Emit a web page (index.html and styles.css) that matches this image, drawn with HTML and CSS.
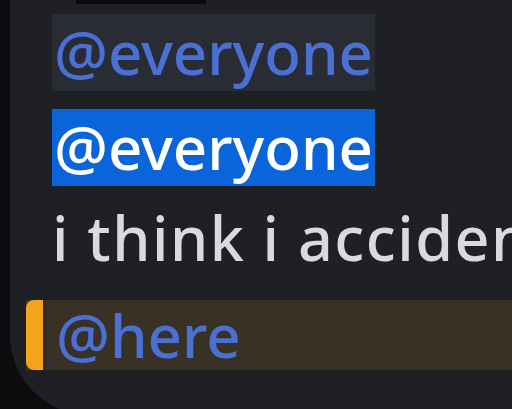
FILE: index.html
```html
<!DOCTYPE html>
<html>
<head>
<meta charset="utf-8">
<link rel="stylesheet" href="styles.css">
</head>
<body>
<div class="panel">
  <div class="topbar"></div>
  <div class="line first"><span class="mention">@everyone</span></div>
  <div class="line second"><span class="mention selected">@everyone</span></div>
  <div class="line text">i think i accidentally pinged everyone</div>
  <div class="highlight">
    <div class="bar"></div>
    <div class="hl-body"><span class="mention plain">@here</span></div>
  </div>
</div>
</body>
</html>
```
FILE: styles.css
```css
html, body {
  margin: 0;
  padding: 0;
  background: #0d0d0f;
  width: 512px;
  height: 409px;
  overflow: hidden;
}
.panel {
  margin-left: 10px;
  height: 415px;
  background: #1f2024;
  border-bottom-left-radius: 80px;
  font-family: "Noto Sans", "Open Sans", sans-serif;
  font-size: 61px;
  font-weight: 500;
  overflow: hidden;
  white-space: nowrap;
}
.topbar {
  margin-left: 66px;
  width: 130px;
  height: 4px;
  background: #0b0b0d;
  margin-bottom: 9px;
}
.line {
  padding-left: 42px;
  height: 77px;
  line-height: 77px;
}
.second {
  margin-top: 18px;
}
.mention {
  display: inline-block;
  height: 77px;
  padding: 0 2px;
  font-size: 60px;
  background: #2a2c35;
  color: #4a70d4;
}
.selected {
  background: #0a64da;
  color: #ffffff;
}
.text {
  margin-top: 13px;
  color: #d9dadd;
  height: 80px;
  line-height: 80px;
  letter-spacing: 1.5px;
}
.highlight {
  margin-top: 22px;
  margin-left: 16px;
  height: 70px;
  display: flex;
  background: #3a3126;
}
.bar {
  width: 17px;
  background: #f5a31a;
  border-radius: 8px 0 0 8px;
}
.hl-body {
  padding-left: 8px;
  border-left: 3px solid #332b22;
  line-height: 70px;
}
.plain {
  background: transparent;
  height: 70px;
  padding: 0 2px;
}
```
